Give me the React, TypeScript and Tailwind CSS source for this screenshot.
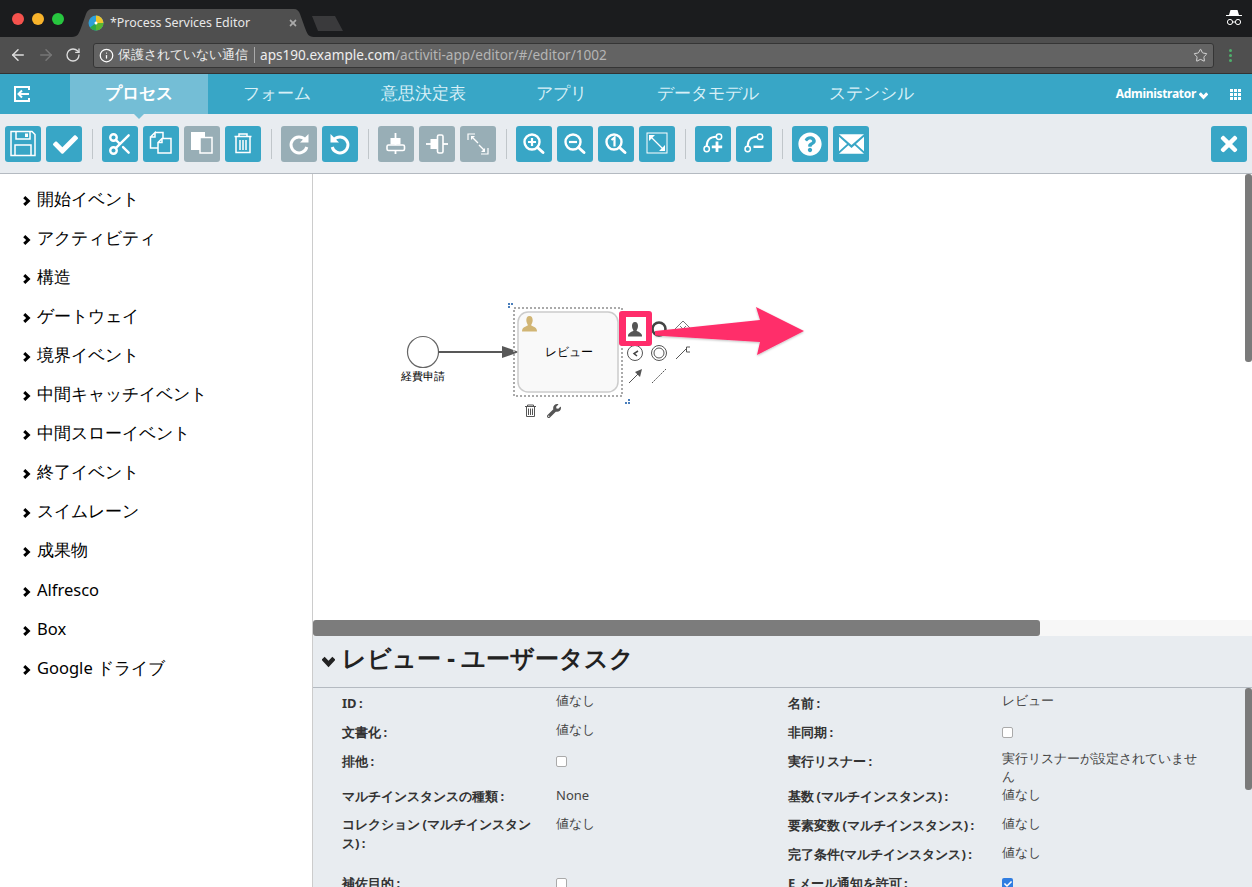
import { FaCheck, FaQuestionCircle, FaTimes, FaWrench } from "react-icons/fa";
import { ArrowLeft, ArrowRight, Info, RotateCw, Scissors, Star } from "lucide-react";
import type { ReactNode } from "react";

const jp = "font-['Lato','Noto_Sans_CJK_JP',sans-serif]";
const personPath = "M8 1 C5.8 1 5 3 5 5 C5 7 6 8.5 6.5 9.5 C6.5 10.5 1.5 11 1 14.5 V15.5 H15 V14.5 C14.5 11 9.5 10.5 9.5 9.5 C10 8.5 11 7 11 5 C11 3 10.2 1 8 1 Z";

function Chevron({ className }: { className?: string }) {
  return (
    <svg viewBox="0 0 10 10" className={className}>
      <path d="M2.5 .8 L7 5 L2.5 9.2" fill="none" stroke="currentColor" strokeWidth="3.4" />
    </svg>
  );
}

function Person({ className }: { className?: string }) {
  return (
    <svg viewBox="0 0 16 16" className={className} fill="currentColor">
      <path d={personPath} />
    </svg>
  );
}

// toolbar icons are drawn on the whole 36x36 button
function Svg({ children }: { children: ReactNode }) {
  return (
    <svg viewBox="0 0 36 36" className="h-9 w-9" fill="none" stroke="white" strokeWidth="1.5">
      {children}
    </svg>
  );
}

function Btn({ children, off }: { children: ReactNode; off?: boolean }) {
  return (
    <button className={`flex h-9 w-9 items-center justify-center rounded-[3px] text-white ${off ? "bg-[#98aeb6]" : "bg-[#38a6c6]"}`}>
      {children}
    </button>
  );
}

function Sep() {
  return <div className="mx-[4.5px] h-[30px] w-px bg-[#c0c6ca]" />;
}

const sidebar = ["開始イベント", "アクティビティ", "構造", "ゲートウェイ", "境界イベント", "中間キャッチイベント", "中間スローイベント", "終了イベント", "スイムレーン", "成果物", "Alfresco", "Box", "Google ドライブ"];
const tabs = ["フォーム", "意思決定表", "アプリ", "データモデル", "ステンシル"];

function Row({ label, h, children }: { label: ReactNode; h: string; children: ReactNode }) {
  return (
    <div className={`flex ${h}`}>
      <div className="w-[214px] shrink-0 pr-6 pt-px text-[13px] font-bold leading-[19px] text-[#333] [word-spacing:-1px]">{label}</div>
      <div className="-mt-[2px] w-[197px] text-[13px] leading-[18px] text-[#444]">{children}</div>
    </div>
  );
}

function Box({ on }: { on?: boolean }) {
  return on ? (
    <div className="mt-[7px] flex h-[11px] w-[11px] items-center justify-center rounded-[2px] bg-[#2f7de1]">
      <FaCheck className="h-2 w-2 text-white" />
    </div>
  ) : (
    <div className="mt-[7px] h-[11px] w-[11px] rounded-[2px] border border-[#aaa] bg-white" />
  );
}

export default function App() {
  return (
    <div className={`flex h-[887px] w-[1252px] flex-col overflow-hidden bg-white ${jp}`}>
      {/* browser tab strip */}
      <div className="relative flex h-[37px] items-center bg-[#1b1c1e]">
        <div className="ml-3 flex gap-2">
          <div className="h-3 w-3 rounded-full bg-[#f5524d]" />
          <div className="h-3 w-3 rounded-full bg-[#f8b32b]" />
          <div className="h-3 w-3 rounded-full bg-[#27c63f]" />
        </div>
        <svg className="absolute left-[72px] top-[9px] h-7 w-[242px]" viewBox="0 0 242 28">
          <path d="M0 28 C6 28 7 24 9 19 L14 5 C15 2 17 0 20 0 L222 0 C225 0 227 2 228 5 L233 19 C235 24 236 28 242 28 Z" fill="#4f4f4f" />
        </svg>
        <svg className="absolute left-[311px] top-[16px] h-4 w-[33px]" viewBox="0 0 33 16">
          <path d="M1 0 H24 L32 15 H7 Z" fill="#3a3a3c" />
        </svg>
        <svg className="absolute left-[88px] top-[15px] h-4 w-4" viewBox="0 0 16 16">
          <circle cx="8" cy="8" r="7.5" fill="#2f9fd8" />
          <path d="M8 8 L8 .5 A7.5 7.5 0 0 1 15.5 8 Z" fill="#f0c52d" />
          <path d="M8 8 L15.5 8 A7.5 7.5 0 0 1 8 15.5 Z" fill="#5ab52f" />
          <path d="M8 8 L8 15.5 A7.5 7.5 0 0 1 2 12.5 Z" fill="#2ea84a" />
          <circle cx="8" cy="8" r="1.5" fill="#fff" />
        </svg>
        <span className="absolute left-[110px] top-[15px] font-['Liberation_Sans',sans-serif] text-[12.4px] leading-[16px] text-[#e8e8e8]">*Process Services Editor</span>
        <FaTimes className="absolute left-[288px] top-[18px] h-[10px] w-[10px] text-[#aaa]" />
        <svg className="absolute left-[1226px] top-[9px] h-[18px] w-[16px]" viewBox="0 0 16 18">
          <path d="M3 6 L4.5 1 H11.5 L13 6 H16 V7 H0 V6 Z" fill="#fff" />
          <circle cx="4" cy="13" r="2.6" fill="none" stroke="#fff" strokeWidth="1" />
          <circle cx="12" cy="13" r="2.6" fill="none" stroke="#fff" strokeWidth="1" />
          <path d="M6.6 13 H9.4" stroke="#fff" />
        </svg>
      </div>

      {/* address bar */}
      <div className="flex h-[37px] items-center border-b border-[#333] bg-[#4f4f4f]">
        <ArrowLeft className="ml-[9px] h-[18px] w-[18px] text-[#ddd]" strokeWidth={2} />
        <ArrowRight className="ml-[10px] h-[18px] w-[18px] text-[#777]" strokeWidth={2} />
        <RotateCw className="ml-[10px] h-[16px] w-[16px] text-[#ddd]" strokeWidth={2} />
        <div className="ml-[12px] flex h-[25px] w-[1121px] items-center rounded-[3px] border border-[#353535] bg-[#636363] font-['Liberation_Sans','Noto_Sans_CJK_JP',sans-serif] text-[13.6px]">
          <Info className="ml-[5px] h-[15px] w-[15px] text-white" strokeWidth={2} />
          <span className="ml-[4px] text-[13px] text-[#eee]">保護されていない通信</span>
          <div className="mx-[5.5px] h-[16px] w-px bg-[#aaa]" />
          <span className="text-[#eee]">aps190.example.com</span>
          <span className="text-[#b5b5b5]">/activiti-app/editor/#/editor/1002</span>
          <Star className="ml-auto mr-[5px] h-[15px] w-[15px] text-[#ddd]" strokeWidth={1.5} />
        </div>
        <div className="ml-[15px] flex flex-col gap-[2px]">
          <div className="h-[3px] w-[3px] rounded-full bg-[#4fb06c]" />
          <div className="h-[3px] w-[3px] rounded-full bg-[#4fb06c]" />
          <div className="h-[3px] w-[3px] rounded-full bg-[#4fb06c]" />
        </div>
      </div>

      {/* app navbar */}
      <div className="relative z-10 flex h-[40px] items-stretch bg-[#38a6c6]">
        <div className="flex w-[70px] items-center pl-[13px]">
          <svg viewBox="0 0 18 18" className="h-[18px] w-[18px]" fill="none" stroke="white" strokeWidth="2">
            <path d="M16 5 V2 H2 V16 H16 V13" />
            <path d="M16 9 H6 M9 5.5 L5.5 9 L9 12.5" />
          </svg>
        </div>
        <div className="relative flex w-[138px] items-center justify-center bg-[#74bed6] pb-[2px] text-[16.8px] font-bold text-white">
          プロセス
          <div className="absolute -bottom-[5px] left-[64px] h-0 w-0 border-x-[5px] border-t-[5px] border-x-transparent border-t-[#74bed6]" />
        </div>
        {tabs.map((t) => (
          <div key={t} className="flex items-center px-[35px] pb-[2px] text-[16.8px] font-medium text-[#d8f0f7]">
            {t}
          </div>
        ))}
        <div className="ml-auto flex items-center pr-[11px] text-white">
          <span className="text-[12px] font-bold tracking-[-0.3px]">Administrator</span>
          <Chevron className="ml-[3px] mt-[3px] h-[9px] w-[9px] rotate-90" />
          <div className="ml-[22px] grid grid-cols-3 gap-px">
            {Array.from({ length: 9 }).map((_, i) => (
              <div key={i} className="h-[3px] w-[3px] bg-white" />
            ))}
          </div>
        </div>
      </div>

      {/* editor toolbar */}
      <div className="flex h-[60px] items-center border-b border-[#b4bac1] bg-[#e8ecf0] pl-[5px] pr-[5px] pt-px">
        <div className="flex w-full items-center gap-[5px]">
          <Btn>
            <Svg>
              <path d="M6 5.5 H27 L30 8.5 V29.5 H6 Z" />
              <path d="M11 5.5 V13 H25 V5.5" />
              <path d="M20 7.5 H23 V11 H20 Z" fill="white" stroke="none" />
              <path d="M10 29 V19 H26 V29" />
            </Svg>
          </Btn>
          <Btn><FaCheck className="ml-[3px] h-[25px] w-[25px]" /></Btn>
          <Sep />
          <Btn><Scissors className="h-[26px] w-[26px]" strokeWidth={2.2} /></Btn>
          <Btn>
            <Svg>
              <path d="M12 6.5 H20 V12 M7.5 11 L12 6.5 V11 H7.5 V22 H15" />
              <path d="M19 12.5 H28 V27 H15 V16.5 Z M19 12.5 V16.5 H15" />
            </Svg>
          </Btn>
          <Btn off>
            <Svg>
              <path d="M7 6 H21 V11 H16 V24 H7 Z" fill="white" stroke="none" />
              <path d="M16 11.5 H28 V27 H16 Z" />
            </Svg>
          </Btn>
          <Btn>
            <Svg>
              <path d="M9.5 10.5 H26.5 M14 10 V8 H22 V10 M11 11 V26.5 H25 V11 M15 14 V24 M18 14 V24 M21 14 V24" />
            </Svg>
          </Btn>
          <Sep />
          <Btn off>
            <Svg>
              <path d="M24 13.5 A8 8 0 1 0 25.8 21" strokeWidth="3" />
              <path d="M27.5 8 V16.5 H19 Z" fill="white" stroke="none" />
            </Svg>
          </Btn>
          <Btn>
            <Svg>
              <path d="M12 13.5 A8 8 0 1 1 10.2 21" strokeWidth="3" />
              <path d="M8.5 8 V16.5 H17 Z" fill="white" stroke="none" />
            </Svg>
          </Btn>
          <Sep />
          <Btn off>
            <Svg>
              <path d="M17.5 7 V28" strokeWidth="1.8" />
              <rect x="12.5" y="12" width="10" height="6.5" fill="white" stroke="none" />
              <rect x="9" y="19" width="17.5" height="5.5" rx="1.5" fill="#98aeb6" strokeWidth="1.6" />
            </Svg>
          </Btn>
          <Btn off>
            <Svg>
              <path d="M7 18 H29" strokeWidth="1.8" />
              <rect x="11.5" y="13" width="7" height="10" fill="white" stroke="none" />
              <rect x="18.5" y="9" width="5.5" height="18" rx="1.5" fill="#98aeb6" strokeWidth="1.6" />
            </Svg>
          </Btn>
          <Btn off>
            <Svg>
              <path d="M15 8 H8 V14 M21 28 H28 V22" strokeWidth="1.2" />
              <path d="M18 17 L13 12 M19 19 L24 24" strokeWidth="1.4" />
              <path d="M11 10 H15 L11 14 Z M25 26 H21 L25 22 Z" fill="white" stroke="none" />
            </Svg>
          </Btn>
          <Sep />
          <Btn>
            <Svg>
              <circle cx="16" cy="16" r="7.5" strokeWidth="2.4" />
              <path d="M21.5 21.5 L27 26.5" strokeWidth="3" strokeLinecap="round" />
              <path d="M16 12 V20 M12 16 H20" strokeWidth="2.2" />
            </Svg>
          </Btn>
          <Btn>
            <Svg>
              <circle cx="16" cy="16" r="7.5" strokeWidth="2.4" />
              <path d="M21.5 21.5 L27 26.5" strokeWidth="3" strokeLinecap="round" />
              <path d="M12 16 H20" strokeWidth="2.2" />
            </Svg>
          </Btn>
          <Btn>
            <Svg>
              <circle cx="16" cy="16" r="7.5" strokeWidth="2.4" />
              <path d="M21.5 21.5 L27 26.5" strokeWidth="3" strokeLinecap="round" />
              <path d="M13.5 14 L16.5 11.5 V20.5" strokeWidth="2.2" />
            </Svg>
          </Btn>
          <Btn>
            <Svg>
              <rect x="8" y="7" width="20" height="20" strokeWidth="1" />
              <path d="M12 11 L24 23" strokeWidth="1.3" />
              <path d="M10 9 H16 L10 15 Z M26 25 H20 L26 19 Z" fill="white" stroke="none" />
            </Svg>
          </Btn>
          <Sep />
          <Btn>
            <Svg>
              <circle cx="11.7" cy="23" r="2.7" />
              <circle cx="24" cy="10.7" r="2.7" />
              <path d="M11.7 20.3 C11.7 14 15 10.7 21.3 10.7" strokeWidth="2" />
              <path d="M22 15.5 V26 M16.8 20.8 H27.2" strokeWidth="2.8" />
            </Svg>
          </Btn>
          <Btn>
            <Svg>
              <circle cx="11.7" cy="23" r="2.7" />
              <circle cx="24" cy="10.7" r="2.7" />
              <path d="M11.7 20.3 C11.7 14 15 10.7 21.3 10.7" strokeWidth="2" />
              <path d="M17.5 20.8 H27.5" strokeWidth="2.4" />
            </Svg>
          </Btn>
          <Sep />
          <Btn><FaQuestionCircle className="h-[24px] w-[24px]" /></Btn>
          <Btn>
            <svg viewBox="0 0 28 22" className="h-[20px] w-[25px]" fill="white">
              <path d="M0 0 H28 L14 12 Z" />
              <path d="M0 3 L9 11 L0 19 Z M28 3 L19 11 L28 19 Z" />
              <path d="M0 22 L10.5 12.5 L14 15.5 L17.5 12.5 L28 22 Z" />
            </svg>
          </Btn>
          <div className="ml-auto">
            <Btn><FaTimes className="h-[24px] w-[24px]" /></Btn>
          </div>
        </div>
      </div>

      {/* main */}
      <div className="flex min-h-0 flex-1">
        <div className="w-[313px] shrink-0 border-r border-[#ccc] bg-white pt-[6px]">
          {sidebar.map((s) => (
            <div key={s} className={`flex h-[39px] items-center pl-[22px] font-['Liberation_Sans','Noto_Sans_CJK_JP',sans-serif] text-[16.5px] text-black ${s === "Alfresco" ? "mt-px" : ""}`}>
              <Chevron className="mr-[6px] mt-[2px] h-[10px] w-[9px] shrink-0" />
              {s}
            </div>
          ))}
        </div>

        <div className="flex min-w-0 flex-1 flex-col">
          {/* canvas */}
          <div className="relative h-[446px] shrink-0 bg-white">
            <div className="absolute right-0 top-0 h-[188px] w-[7px] rounded-[3px] bg-[#7a7a7a]" />
            <svg className="absolute left-0 top-0 h-[446px] w-[939px]" viewBox="313 174 939 446">
              <defs>
                <filter id="sh" x="-10%" y="-10%" width="120%" height="130%">
                  <feDropShadow dx="0" dy="1" stdDeviation="1" floodColor="#000" floodOpacity="0.25" />
                </filter>
              </defs>
              <circle cx="423" cy="352" r="15.5" fill="#fff" stroke="#666" strokeWidth="1.2" />
              <path d="M438 352 H505" stroke="#585858" strokeWidth="2" />
              <path d="M502 346 L519 352 L502 358 Z" fill="#585858" />
              <rect x="514" y="308" width="108" height="88" fill="none" stroke="#aaa" strokeWidth="2" strokeDasharray="2 2" />
              <rect x="518" y="312" width="100" height="80" rx="10" fill="#f9f9f9" stroke="#ccc" strokeWidth="1.5" />
              <path d="M508 303 h2 v2 h-2 Z M511 303 h2 v2 h-2 Z M508 306 h2 v2 h-2 Z" fill="#4a7ebb" />
              <path d="M625 402 h2 v2 h-2 Z M628 402 h2 v2 h-2 Z M628 399 h2 v2 h-2 Z" fill="#4a7ebb" />
              {/* morph icons */}
              <circle cx="659" cy="329" r="6.5" fill="none" stroke="#444" strokeWidth="2.6" />
              <path d="M683 321 L691 329 L683 337 L675 329 Z" fill="none" stroke="#777" />
              <path d="M680 326 L686 332 M686 326 L680 332" stroke="#777" />
              <circle cx="635" cy="353" r="7.5" fill="none" stroke="#555" />
              <path d="M638 351 L634 353.5 L637 356" fill="none" stroke="#444" strokeWidth="1.5" />
              <circle cx="659" cy="353" r="7.5" fill="none" stroke="#555" />
              <circle cx="659" cy="353" r="5" fill="none" stroke="#555" />
              <path d="M676 359 L686 349" stroke="#555" />
              <path d="M690 347 H686.5 V352 H690" fill="none" stroke="#555" />
              <path d="M629 383 L640 372" stroke="#555" />
              <path d="M642 369 L640 377 L635 372 Z" fill="#555" />
              <path d="M652 383 L666 369" stroke="#555" strokeDasharray="2 1" />
              {/* trash */}
              <path d="M525 406.5 H536 M527.5 406.5 V405 H533.5 V406.5 M526.5 407 V416.5 H534.5 V407 M528.5 408.5 V415 M530.5 408.5 V415 M532.5 408.5 V415" fill="none" stroke="#555" />
              {/* pink arrow */}
              <path d="M655 331 L760 320 L756 307 L804 331 L757 355 L760 342 L655 335.5 Z" fill="#ff2d6b" filter="url(#sh)" />
            </svg>
            <FaWrench className="absolute left-[234px] top-[230px] h-[14px] w-[14px] text-[#555]" />
            <Person className="absolute left-[208px] top-[141px] h-[17px] w-[17px] text-[#d1b574]" />
            <div className="absolute left-[306px] top-[137px] flex h-[35px] w-[33px] items-center justify-center rounded-[3px] bg-[#ff2d6b]">
              <div className="flex h-[24px] w-[20px] items-center justify-center bg-white">
                <Person className="-ml-[2px] h-4 w-4 text-[#555]" />
              </div>
            </div>
            <span className="absolute left-[88px] top-[195px] text-[11px] leading-[14px] text-black">経費申請</span>
            <span className="absolute left-[232px] top-[171px] text-[11.5px] leading-[14px] text-black">レビュー</span>
          </div>

          {/* horizontal scrollbar */}
          <div className="h-[16px] shrink-0 bg-[#f7f7f7] pr-[212px]">
            <div className="h-full rounded-[3px] bg-[#7c7c7c]" />
          </div>

          {/* properties */}
          <div className="min-h-0 flex-1 bg-[#e8ecf0]">
            <div className="flex h-[52px] items-center border-b border-[#b4bac1] pb-[6px] pl-[9px]">
              <Chevron className="mr-[7px] mt-[5px] h-[13px] w-[13px] rotate-90 text-[#222]" />
              <span className="text-[24.2px] font-bold text-[#222]">レビュー - ユーザータスク</span>
            </div>
            <div className="relative flex pl-[29px] pt-[5px]">
              <div className="absolute right-0 top-0 h-[102px] w-[7px] rounded-[3px] bg-[#7a7a7a]" />
              <div className="w-[446px]">
                <Row label="ID :" h="h-[29px]">値なし</Row>
                <Row label="文書化 :" h="h-[29px]">値なし</Row>
                <Row label="排他 :" h="h-[35px]"><Box /></Row>
                <Row label="マルチインスタンスの種類 :" h="h-[28px]"><div className="mt-[2px]">None</div></Row>
                <Row label="コレクション (マルチインスタンス) :" h="h-[59px]"><div className="mt-[2px]">値なし</div></Row>
                <Row label="補佐目的 :" h="h-[29px]"><Box /></Row>
              </div>
              <div className="w-[414px]">
                <Row label="名前 :" h="h-[29px]">レビュー</Row>
                <Row label="非同期 :" h="h-[29px]"><Box /></Row>
                <Row label="実行リスナー :" h="h-[35px]">実行リスナーが設定されていません</Row>
                <Row label="基数 (マルチインスタンス) :" h="h-[29px]"><div className="mt-px">値なし</div></Row>
                <Row label="要素変数 (マルチインスタンス) :" h="h-[29px]"><div className="mt-px">値なし</div></Row>
                <Row label="完了条件(マルチインスタンス) :" h="h-[29px]"><div className="mt-px">値なし</div></Row>
                <Row label="E メール通知を許可 :" h="h-[29px]"><Box on /></Row>
              </div>
            </div>
          </div>
        </div>
      </div>
    </div>
  );
}
